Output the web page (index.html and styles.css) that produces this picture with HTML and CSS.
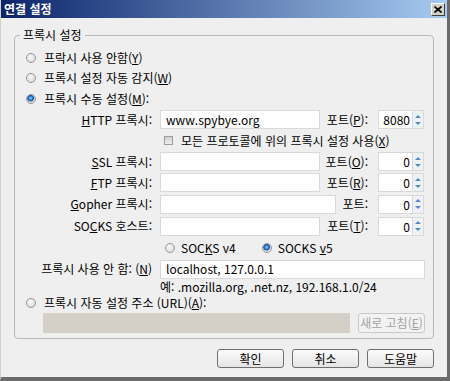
FILE: index.html
```html
<!DOCTYPE html>
<html lang="ko">
<head>
    <meta charset="UTF-8">
    <title>연결 설정</title>
    <link rel="stylesheet" href="styles.css">
</head>
<body>

    <div class="window">
        <div class="titlebar">
            <span class="title">연결 설정</span>
            <span class="close">
                <svg width="8" height="7" viewBox="0 0 8 7"><path d="M0.5 0.5 L7.5 6.5 M7.5 0.5 L0.5 6.5" stroke="#000" stroke-width="1.7" fill="none"/></svg>
            </span>
        </div>

        <div class="dialog">
            <fieldset class="group">
                <legend>프록시 설정</legend>

                <div class="option"><span class="radio"></span><span>프락시 사용 안함(<u>Y</u>)</span></div>
                <div class="option"><span class="radio"></span><span>프록시 설정 자동 감지(<u>W</u>)</span></div>
                <div class="option option-tall"><span class="radio checked"></span><span>프록시 수동 설정(<u>M</u>):</span></div>

                <div class="manual">
                    <span class="field-label"><u>H</u>TTP 프록시:</span>
                    <div class="textbox">www.spybye.org</div>
                    <span class="port-label">포트(<u>P</u>):</span>
                    <div class="spin"><div class="spin-value">8080</div><div class="spin-arrows"><span class="up"></span><span class="down"></span></div></div>

                    <div class="share"><span class="check"></span><span>모든 프로토콜에 위의 프록시 설정 사용(<u>X</u>)</span></div>

                    <span class="field-label"><u>S</u>SL 프록시:</span>
                    <div class="textbox"></div>
                    <span class="port-label">포트(<u>O</u>):</span>
                    <div class="spin"><div class="spin-value">0</div><div class="spin-arrows"><span class="up"></span><span class="down"></span></div></div>

                    <span class="field-label"><u>F</u>TP 프록시:</span>
                    <div class="textbox"></div>
                    <span class="port-label">포트(<u>R</u>):</span>
                    <div class="spin"><div class="spin-value">0</div><div class="spin-arrows"><span class="up"></span><span class="down"></span></div></div>

                    <span class="field-label"><u>G</u>opher 프록시:</span>
                    <div class="textbox textbox-wide"></div>
                    <span class="port-label">포트:</span>
                    <div class="spin"><div class="spin-value">0</div><div class="spin-arrows"><span class="up"></span><span class="down"></span></div></div>

                    <span class="field-label">SO<u>C</u>KS 호스트:</span>
                    <div class="textbox"></div>
                    <span class="port-label">포트(<u>T</u>):</span>
                    <div class="spin"><div class="spin-value">0</div><div class="spin-arrows"><span class="up"></span><span class="down"></span></div></div>

                    <div class="socks-version">
                        <span class="radio"></span><span class="socks-name">SOC<u>K</u>S v4</span>
                        <span class="radio checked"></span><span>SOCKS <u>v</u>5</span>
                    </div>

                    <span class="field-label">프록시 사용 안 함: (<u>N</u>)</span>
                    <div class="textbox textbox-long">localhost, 127.0.0.1</div>

                    <div class="hint">예: .mozilla.org, .net.nz, 192.168.1.0/24</div>
                </div>

                <div class="option option-short"><span class="radio"></span><span>프록시 자동 설정 주소 (URL)(<u>A</u>):</span></div>
                <div class="autoconfig">
                    <div class="textbox textbox-disabled"></div>
                    <button class="btn btn-disabled">새로 고침(<u>E</u>)</button>
                </div>
            </fieldset>

            <div class="actions">
                <button class="btn">확인</button>
                <button class="btn">취소</button>
                <button class="btn">도움말</button>
            </div>
        </div>
    </div>

</body>
</html>
```

FILE: styles.css
```css
body {
    margin: 0;
    font-family: "Noto Sans CJK KR", "Liberation Sans", sans-serif;
    font-size: 12px;
    line-height: 14px;
    color: #000;
    background: #efefef;
}
u {
    text-decoration: underline;
    text-underline-offset: 1px;
}
.window {
    width: 450px;
    height: 381px;
    box-sizing: border-box;
    border-style: solid;
    border-width: 0 3px 4px 1px;
    border-color: #d4d0c8 #6a6a6a #6a6a6a #d4d0c8;
    background: #efefef;
    overflow: hidden;
}
.titlebar {
    height: 18px;
    display: flex;
    align-items: center;
    justify-content: space-between;
    padding: 0 2px 0 3px;
    background: linear-gradient(to right, #0a246a, #a6caf0);
}
.title {
    color: #fff;
    font-weight: bold;
}
.close {
    width: 14px;
    height: 13px;
    box-sizing: border-box;
    display: flex;
    align-items: center;
    justify-content: center;
    background: #d4d0c8;
    border: 1px solid;
    border-color: #fff #404040 #404040 #fff;
}
.dialog {
    padding: 10px 13px 0 13px;
}
.group {
    margin: 0;
    padding: 6px 8px 5px 11px;
    border: 1px solid #b9b9b9;
    border-radius: 4px;
}
.group legend {
    padding: 0 3px;
    margin-left: -6px;
    line-height: 14px;
}
.option {
    height: 20px;
    display: flex;
    align-items: center;
    gap: 8px;
}
.option-tall { height: 21px; }
.option-short { height: 16px; }

.radio {
    width: 10px;
    height: 10px;
    box-sizing: border-box;
    border-radius: 50%;
    border: 1px solid #959595;
    background: radial-gradient(circle at 40% 35%, #f8f8f8, #d6d6d6);
    flex: none;
}
.radio.checked {
    background: radial-gradient(circle at 45% 40%, #9fd3ff 0, #2a78c8 2px, #1c4f94 3px, #dadada 3.6px, #f0f0f0);
}
.check {
    width: 9px;
    height: 9px;
    box-sizing: border-box;
    border: 1px solid #9c9c9c;
    background: linear-gradient(#d2d2d2, #eeeeee);
    flex: none;
}

.manual {
    display: grid;
    grid-template-columns: 134px 160px 58px 47px;
    grid-template-rows: 21px 21px 21px 21px 22px 22px 22px 20px 16px;
    align-items: center;
}
.field-label {
    justify-self: end;
    padding-right: 8px;
    white-space: nowrap;
}
.port-label {
    justify-self: end;
    padding-right: 10px;
    white-space: nowrap;
}
.textbox {
    height: 19px;
    box-sizing: border-box;
    padding: 0 5px;
    display: flex;
    align-items: center;
    background: #fff;
    border: 1px solid #d9d9d9;
    white-space: nowrap;
}
.textbox-wide {
    width: 176px;
}
.textbox-long {
    grid-column: 2 / span 3;
}
.textbox-disabled {
    width: 307px;
    height: 20px;
    background: #d4d0c8;
    border-color: #d4d0c8;
}
.spin {
    display: flex;
    height: 19px;
}
.spin-value {
    width: 35px;
    box-sizing: border-box;
    padding-right: 2px;
    text-align: right;
    background: #fff;
    border: 1px solid #d9d9d9;
    line-height: 17px;
}
.spin-arrows {
    width: 11px;
    display: flex;
    flex-direction: column;
    gap: 1px;
    padding: 2px 0;
    box-sizing: border-box;
    background: #eef2f7;
    border: 1px solid #d9d9d9;
    border-left: none;
}
.spin-arrows span {
    flex: 1;
    display: flex;
    align-items: center;
    justify-content: center;
}
.spin-arrows .up::before {
    content: "";
    border: 3px solid transparent;
    border-bottom: 3px solid #5a86c0;
    border-top: none;
}
.spin-arrows .down::before {
    content: "";
    border: 3px solid transparent;
    border-top: 3px solid #5a86c0;
    border-bottom: none;
}
.share {
    grid-column: 2 / span 3;
    display: flex;
    align-items: center;
    gap: 8px;
    padding-left: 4px;
}
.socks-version {
    grid-column: 2 / span 3;
    display: flex;
    align-items: center;
    gap: 6px;
    padding-left: 5px;
}
.socks-version .socks-name {
    margin-right: 20px;
}
.hint {
    grid-column: 2 / span 3;
}
.autoconfig {
    display: flex;
    gap: 8px;
    margin: 2px 0 0 17px;
}

.btn {
    width: 67px;
    height: 19px;
    padding: 0;
    font-family: inherit;
    font-size: 12px;
    line-height: 14px;
    color: #000;
    background: linear-gradient(#fcfcfc, #e4e4e4);
    border: 1px solid #707070;
    border-radius: 3px;
}
.btn-disabled {
    height: 20px;
    color: #a3a3a3;
    background: #f2f2f2;
    border-color: #c9c9c9;
}
.actions {
    display: flex;
    justify-content: flex-end;
    gap: 8px;
    margin-top: 10px;
}
```
